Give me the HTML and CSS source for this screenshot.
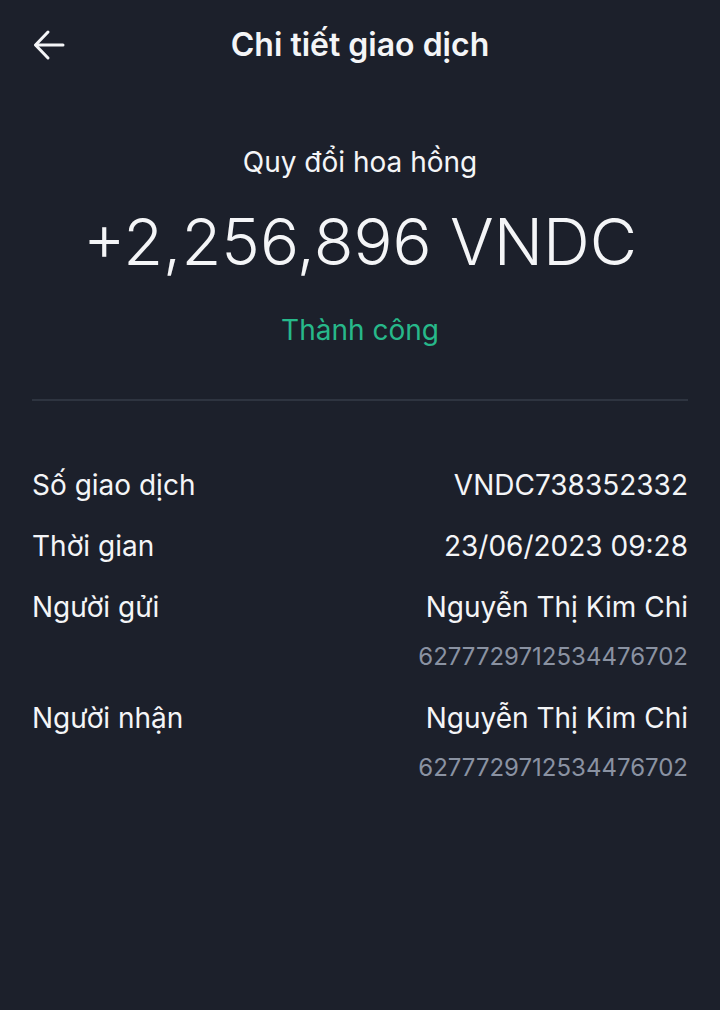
FILE: index.html
```html
<!DOCTYPE html>
<html lang="vi">
<head>
<meta charset="utf-8">
<title>Chi tiết giao dịch</title>
<link rel="stylesheet" href="styles.css">
</head>
<body>
<div class="screen">
  <header class="topbar">
    <button class="back" aria-label="Quay lại">
      <svg width="34" height="34" viewBox="0 0 34 34" fill="none" stroke="#f4f5f7" stroke-width="3" stroke-linecap="round" stroke-linejoin="round">
        <path d="M31 17H4"/>
        <path d="M16 4L3.5 17L16 30"/>
      </svg>
    </button>
    <h1 class="title">Chi tiết giao dịch</h1>
  </header>

  <section class="summary">
    <div class="type">Quy đổi hoa hồng</div>
    <div class="amount">+2,256,896 VNDC</div>
    <div class="status">Thành công</div>
  </section>

  <div class="divider"></div>

  <section class="details">
    <div class="row">
      <div class="label">Số giao dịch</div>
      <div class="value">VNDC738352332</div>
    </div>
    <div class="row">
      <div class="label">Thời gian</div>
      <div class="value">23/06/2023 09:28</div>
    </div>
    <div class="row">
      <div class="label">Người gửi</div>
      <div class="value">Nguyễn Thị Kim Chi<span class="sub">6277729712534476702</span></div>
    </div>
    <div class="row">
      <div class="label">Người nhận</div>
      <div class="value">Nguyễn Thị Kim Chi<span class="sub">6277729712534476702</span></div>
    </div>
  </section>
</div>
</body>
</html>
```

FILE: styles.css
```css
* { box-sizing: border-box; }
html, body {
  margin: 0;
  padding: 0;
  background: #1c202b;
}
body {
  font-family: Inter, "Noto Sans", sans-serif;
  color: #f4f5f7;
}
.screen {
  width: 720px;
  min-height: 1010px;
  padding: 0 32px;
}
.topbar {
  position: relative;
  height: 90px;
  padding-bottom: 2px;
  display: flex;
  align-items: center;
  justify-content: center;
}
.back {
  position: absolute;
  left: 0;
  top: 28px;
  padding: 0;
  border: 0;
  background: none;
  width: 34px;
  height: 34px;
  display: flex;
}
.title {
  margin: 0;
  font-size: 32px;
  font-weight: 600;
  letter-spacing: 0;
}
.summary {
  display: flex;
  flex-direction: column;
  align-items: center;
  padding-top: 52px;
}
.type {
  font-size: 28px;
  line-height: 40px;
  font-weight: 400;
}
.amount {
  margin-top: 20px;
  font-size: 65px;
  line-height: 80px;
  font-weight: 300;
  letter-spacing: 0;
}
.status {
  margin-top: 28px;
  font-size: 28px;
  line-height: 40px;
  color: #27b88a;
}
.divider {
  margin-top: 49px;
  height: 2px;
  background: #2e3440;
}
.details {
  padding-top: 64px;
  display: flex;
  flex-direction: column;
  gap: 21px;
}
.row {
  display: flex;
  justify-content: space-between;
  align-items: flex-start;
  font-size: 28px;
  line-height: 40px;
}
.value {
  display: flex;
  flex-direction: column;
  align-items: flex-end;
}
.sub {
  margin-top: 10px;
  font-size: 24px;
  line-height: 40px;
  color: #8a92a2;
}
```
